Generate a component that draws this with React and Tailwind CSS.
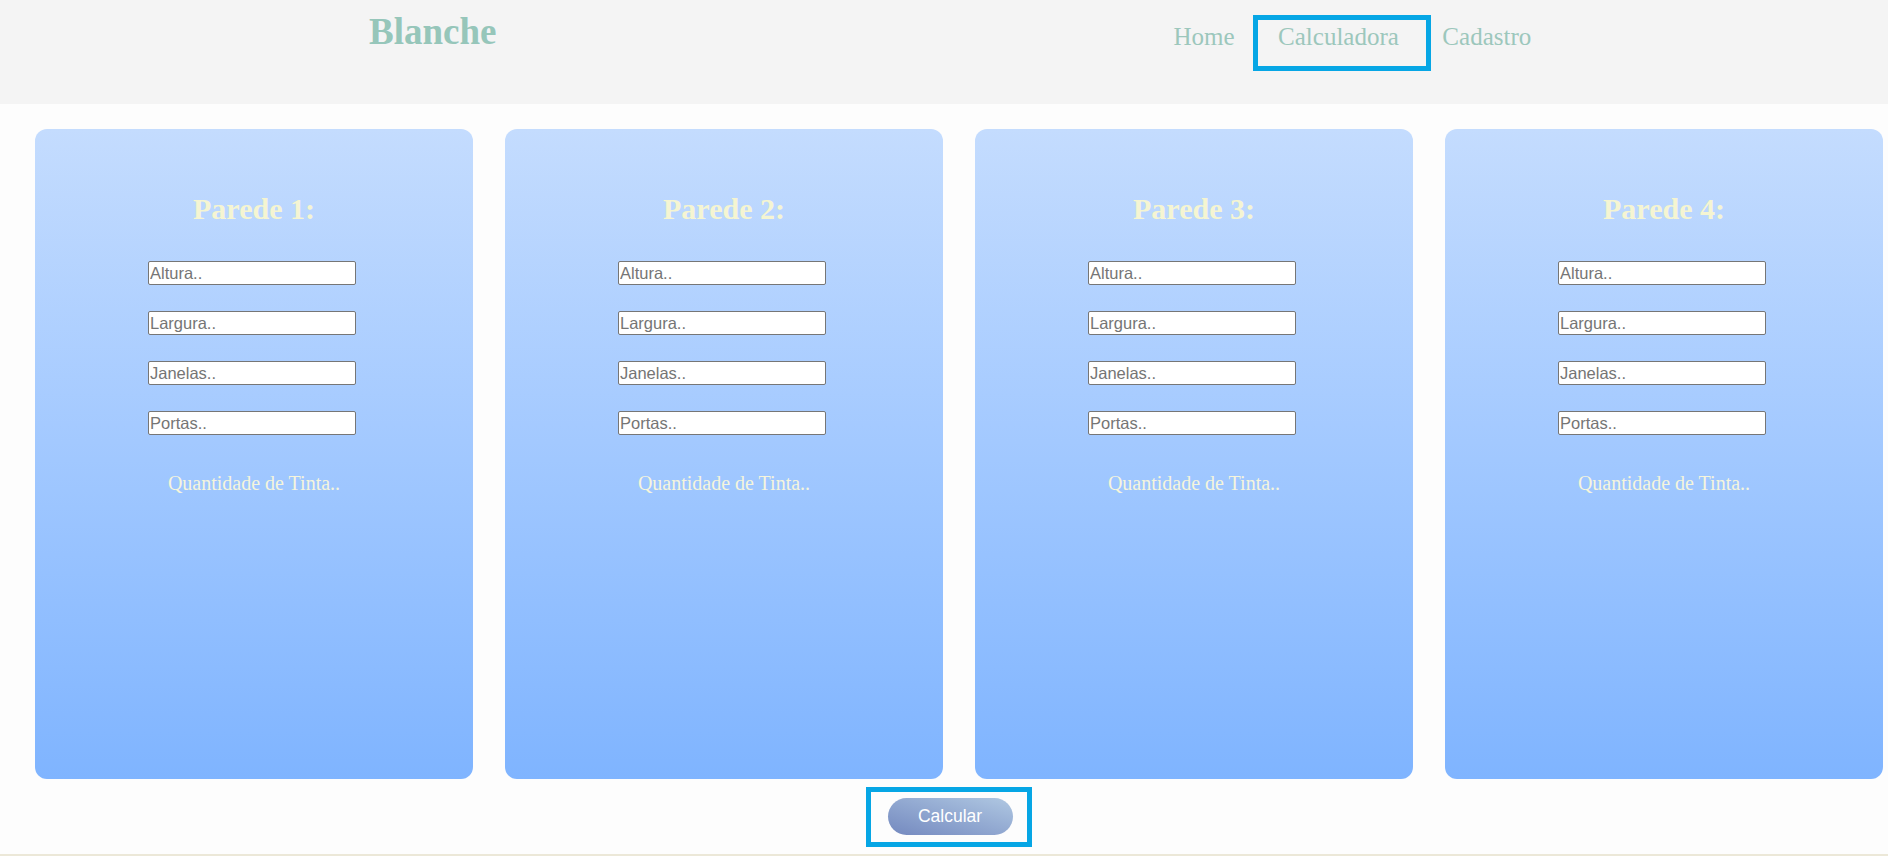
import React from 'react';

const serif = { fontFamily: '"Liberation Serif", "Times New Roman", serif' };
const sans = { fontFamily: '"Liberation Sans", Arial, sans-serif' };

const campos = ['Altura..', 'Largura..', 'Janelas..', 'Portas..'];

const Parede = ({ numero }) => (
  <div className="w-[438px] h-[650px] shrink-0 rounded-[12px] bg-linear-to-b from-[#c4dcfe] to-[#7fb4ff] flex flex-col items-center pt-[65px]">
    <h2 style={serif} className="text-[30px] leading-[30px] font-bold text-[#f5f5d2]">
      Parede {numero}:
    </h2>
    <div className="mt-[37px] flex flex-col gap-[26px] self-start ml-[113px]">
      {campos.map((c) => (
        <input
          key={c}
          type="text"
          placeholder={c}
          style={sans}
          className="w-[208px] h-[24px] bg-white border border-[#767676] rounded-[2px] px-[1px] text-[16.5px] text-black placeholder:text-[#757575] outline-none"
        />
      ))}
    </div>
    <p style={serif} className="mt-[38px] text-[20px] leading-[20px] text-[#f5f5dc]">
      Quantidade de Tinta..
    </p>
  </div>
);

const App = () => {
  return (
    <div className="w-[1888px] h-[856px] bg-[#fdfdfd] flex flex-col overflow-hidden">
      <header className="h-[104px] bg-[#f4f4f4] flex items-start">
        <h1 style={serif} className="ml-[369px] mt-[13px] text-[37px] leading-[37px] font-bold text-[#96c6ba]">
          Blanche
        </h1>
        <nav style={serif} className="ml-[677px] mt-[24px] flex gap-[43.5px] text-[25px] leading-[25px] text-[#9cc7bc]">
          <a href="#">Home</a>
          <a href="#" className="relative">
            Calculadora
            <span className="absolute -left-[25px] -right-[32px] -top-[9px] -bottom-[22px] border-[5px] border-[#06a6e5]" />
          </a>
          <a href="#">Cadastro</a>
        </nav>
      </header>

      <main className="pt-[25px] pl-[35px] flex gap-[32px]">
        {[1, 2, 3, 4].map((n) => (
          <Parede key={n} numero={n} />
        ))}
      </main>

      <div className="pt-[8px] flex justify-center pl-[9px]">
        <div className="relative w-[166px] h-[60px] pl-[22px] pt-[11px]">
          <button
            type="button"
            style={sans}
            className="w-[125px] h-[37px] rounded-full bg-linear-to-tr from-[#7489bf] to-[#b0c8e2] text-white text-[17.5px]"
          >
            Calcular
          </button>
          <span className="absolute inset-0 border-[5px] border-[#06a6e5]" />
        </div>
      </div>

      <div className="mt-[7px] h-[2px] bg-[#ece8d8]" />
    </div>
  );
};

export default App;
